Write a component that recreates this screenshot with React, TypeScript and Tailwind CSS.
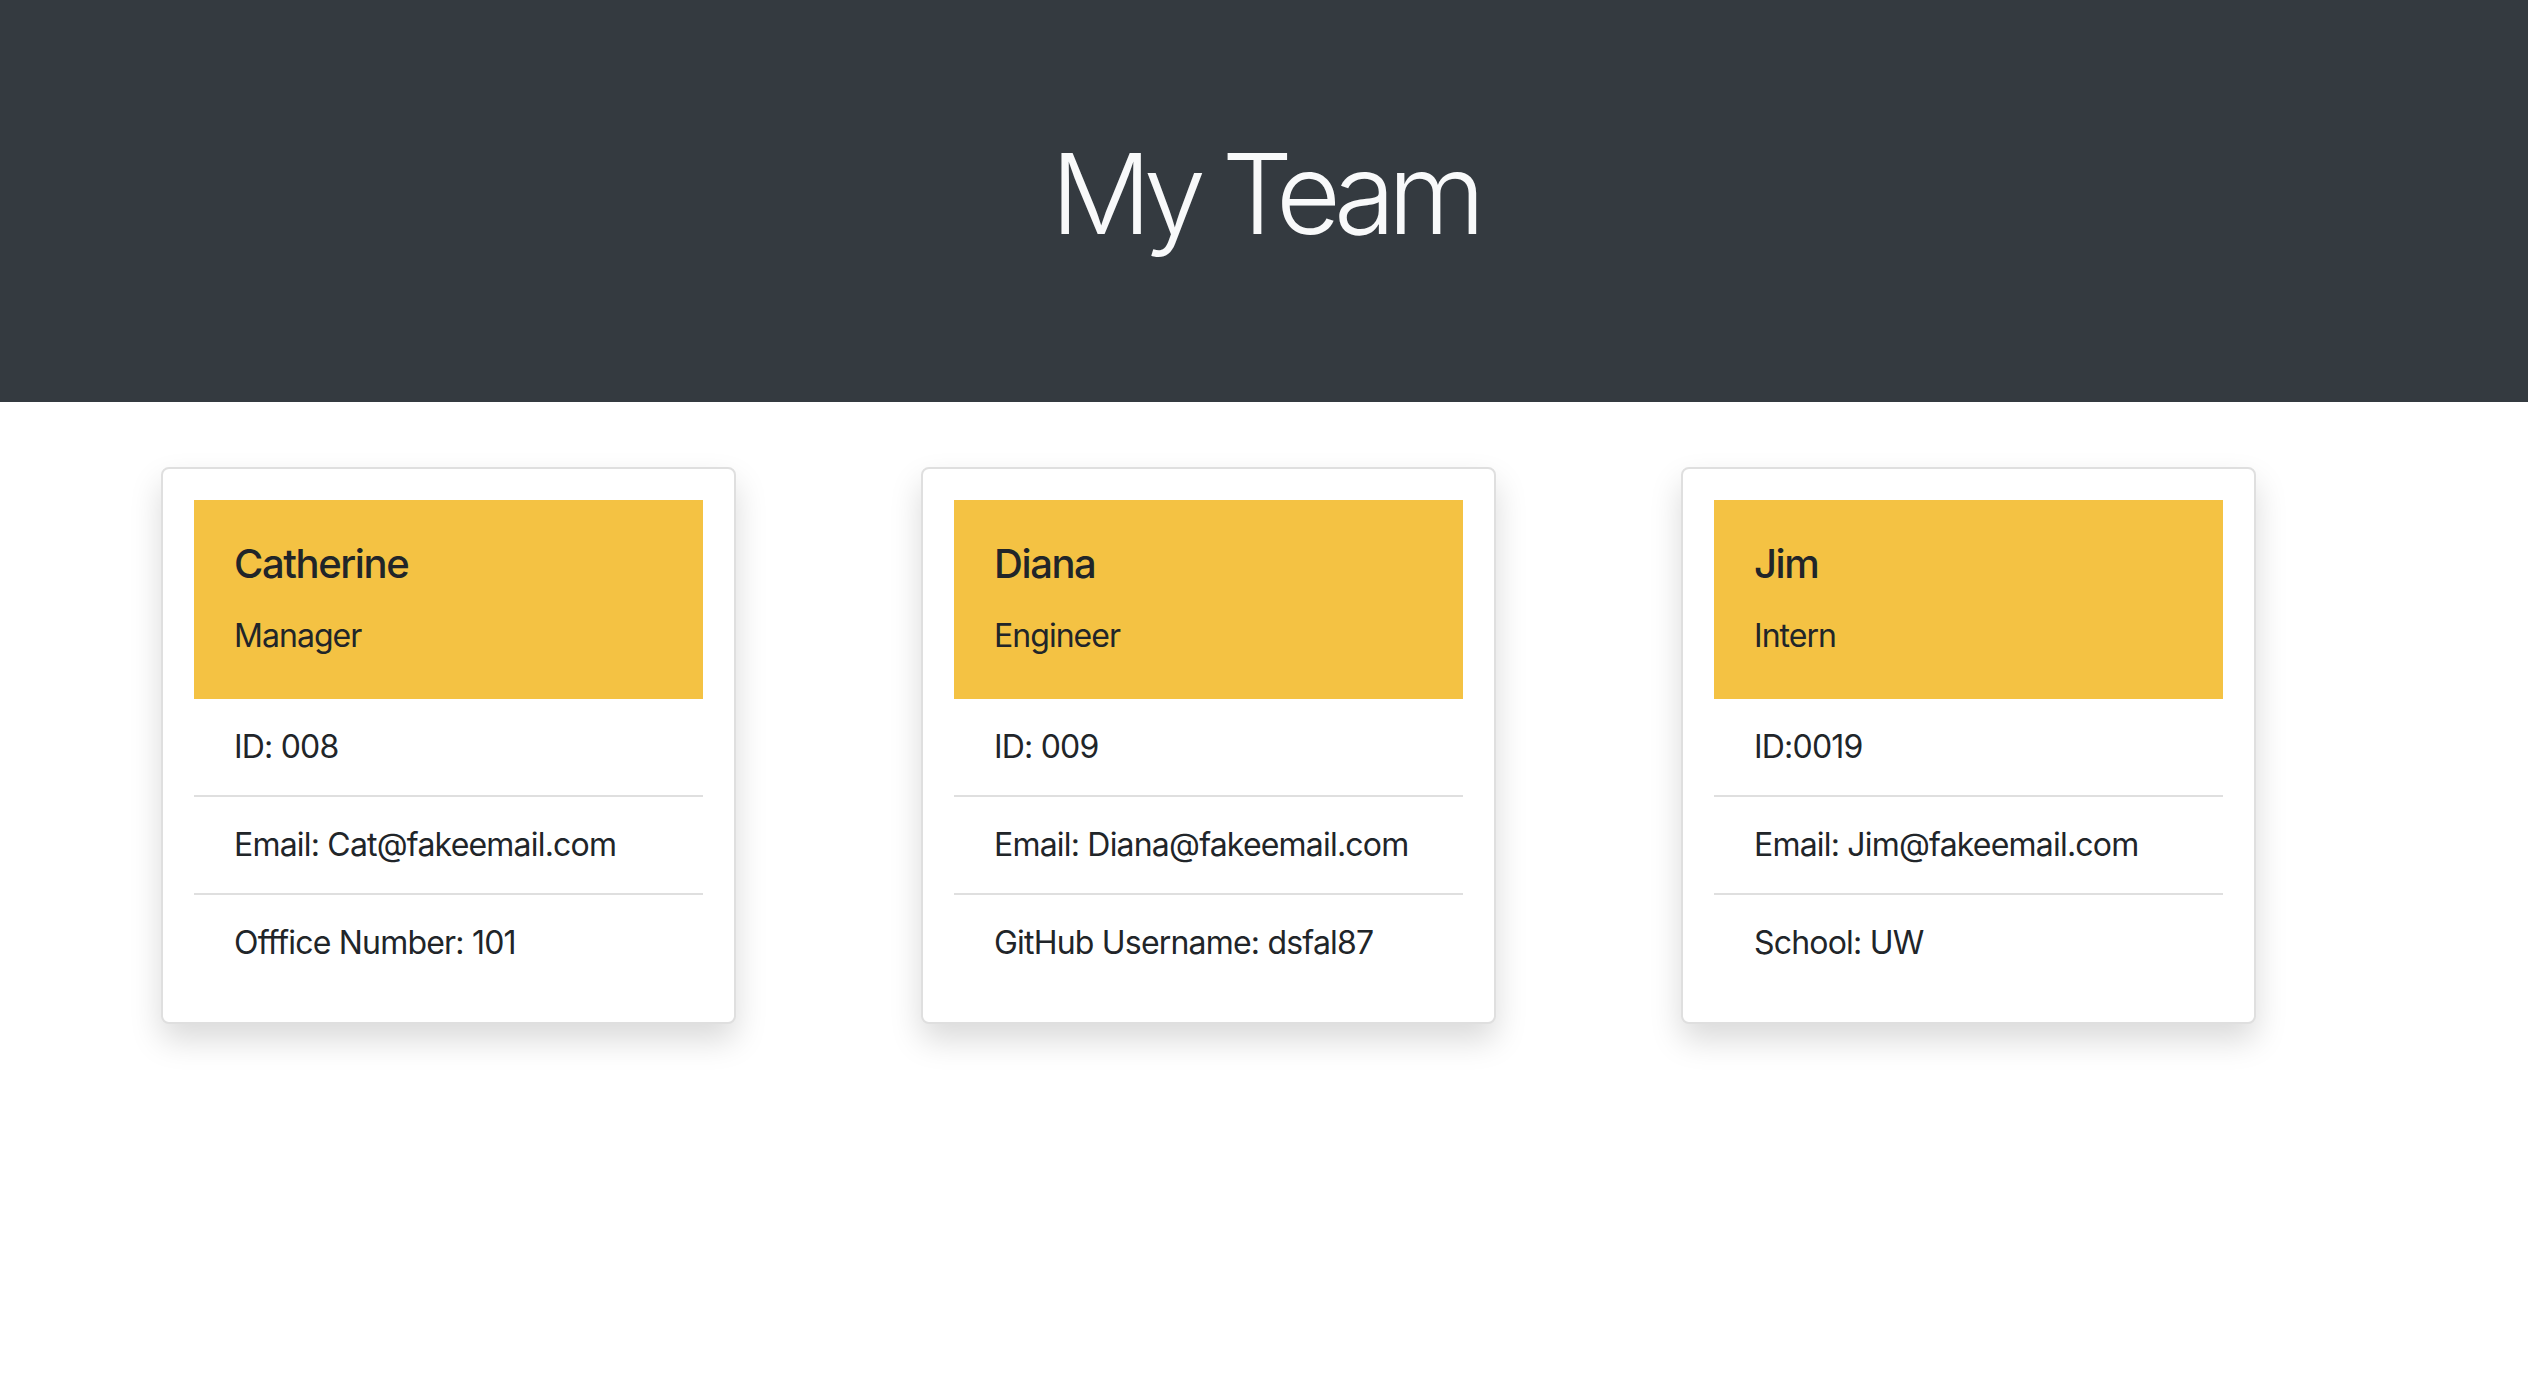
import React from "react";

type Member = {
  name: string;
  role: string;
  rows: string[];
};

const members: Member[] = [
  { name: "Catherine", role: "Manager", rows: ["ID: 008", "Email: Cat@fakeemail.com", "Offfice Number: 101"] },
  { name: "Diana", role: "Engineer", rows: ["ID: 009", "Email: Diana@fakeemail.com", "GitHub Username: dsfal87"] },
  { name: "Jim", role: "Intern", rows: ["ID:0019", "Email: Jim@fakeemail.com", "School: UW"] },
];

function Card({ m }: { m: Member }) {
  return (
    <div className="w-[575px] shrink-0 rounded-[8px] border-2 border-[#dfdfdf] bg-white p-[31px] shadow-[0_16px_32px_rgba(0,0,0,0.15)]">
      <div className="bg-[#f4c243] px-[40px] pt-[40px] pb-[39px] text-[#212529]">
        <div className="whitespace-nowrap text-[40px] font-medium leading-[48px] tracking-[-0.035em]">{m.name}</div>
        <div className="mt-[24px] whitespace-nowrap text-[32px] font-normal leading-[48px] tracking-[-0.03em]">{m.role}</div>
      </div>
      <div className="text-[#212529]">
        {m.rows.map((r, i) => (
          <div
            key={i}
            className={
              i < m.rows.length - 1
                ? "whitespace-nowrap border-b-2 border-[#dfdfdf] px-[40px] py-[24px] text-[32px] leading-[48px] tracking-[-0.025em]"
                : "whitespace-nowrap px-[40px] py-[24px] text-[32px] leading-[48px] tracking-[-0.025em]"
            }
          >
            {r}
          </div>
        ))}
      </div>
    </div>
  );
}

export default function App() {
  return (
    <div className="min-h-[1382px] bg-white" style={{ fontFamily: "Inter, 'Noto Sans', sans-serif" }}>
      <header className="bg-[#343a40] pt-[126px] pb-[142px] text-center">
        <h1 className="text-[112px] font-light leading-[134px] tracking-[-8px] text-[#f8f9fa]">My Team</h1>
      </header>
      <main className="mt-[65px] flex items-start gap-[185px] pl-[161px]">
        {members.map((m) => (
          <Card key={m.name} m={m} />
        ))}
      </main>
    </div>
  );
}
